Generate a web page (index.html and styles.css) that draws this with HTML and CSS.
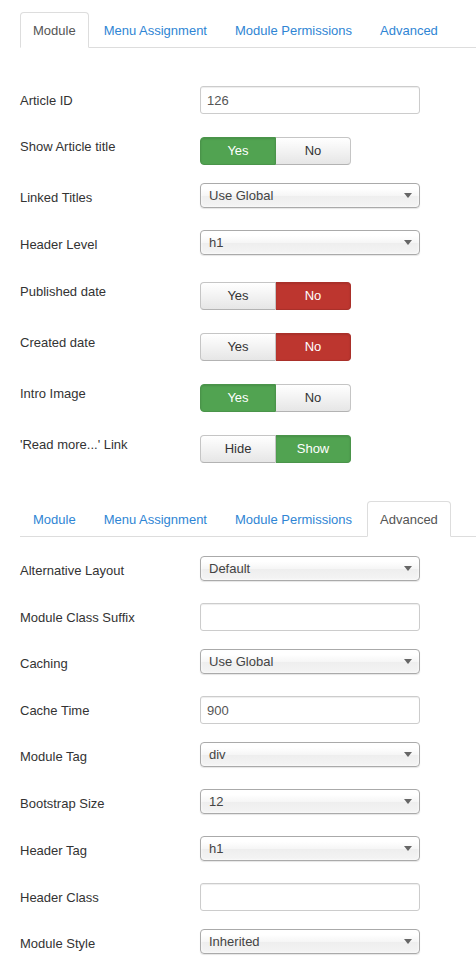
FILE: index.html
```html
<!DOCTYPE html>
<html>
<head>
<meta charset="utf-8">
<link rel="stylesheet" href="styles.css">
</head>
<body>
<div class="page">
  <ul class="tabs">
    <li><a class="tab active">Module</a></li>
    <li><a class="tab">Menu Assignment</a></li>
    <li><a class="tab">Module Permissions</a></li>
    <li><a class="tab">Advanced</a></li>
  </ul>
  <div class="form first">
    <div class="row">
      <label class="label">Article ID</label>
      <input class="text" type="text" value="126">
    </div>
    <div class="row">
      <label class="label">Show Article title</label>
      <div class="toggle"><span class="btn green">Yes</span><span class="btn">No</span></div>
    </div>
    <div class="row">
      <label class="label">Linked Titles</label>
      <div class="select"><span>Use Global</span><i class="arrow"></i></div>
    </div>
    <div class="row">
      <label class="label">Header Level</label>
      <div class="select"><span>h1</span><i class="arrow"></i></div>
    </div>
    <div class="row">
      <label class="label">Published date</label>
      <div class="toggle"><span class="btn">Yes</span><span class="btn red">No</span></div>
    </div>
    <div class="row">
      <label class="label">Created date</label>
      <div class="toggle"><span class="btn">Yes</span><span class="btn red">No</span></div>
    </div>
    <div class="row">
      <label class="label">Intro Image</label>
      <div class="toggle"><span class="btn green">Yes</span><span class="btn">No</span></div>
    </div>
    <div class="row">
      <label class="label">'Read more...' Link</label>
      <div class="toggle"><span class="btn">Hide</span><span class="btn green">Show</span></div>
    </div>
  </div>

  <ul class="tabs second">
    <li><a class="tab">Module</a></li>
    <li><a class="tab">Menu Assignment</a></li>
    <li><a class="tab">Module Permissions</a></li>
    <li><a class="tab active">Advanced</a></li>
  </ul>
  <div class="form">
    <div class="row">
      <label class="label">Alternative Layout</label>
      <div class="select"><span>Default</span><i class="arrow"></i></div>
    </div>
    <div class="row">
      <label class="label">Module Class Suffix</label>
      <input class="text" type="text" value="">
    </div>
    <div class="row">
      <label class="label">Caching</label>
      <div class="select"><span>Use Global</span><i class="arrow"></i></div>
    </div>
    <div class="row">
      <label class="label">Cache Time</label>
      <input class="text" type="text" value="900">
    </div>
    <div class="row">
      <label class="label">Module Tag</label>
      <div class="select"><span>div</span><i class="arrow"></i></div>
    </div>
    <div class="row">
      <label class="label">Bootstrap Size</label>
      <div class="select"><span>12</span><i class="arrow"></i></div>
    </div>
    <div class="row">
      <label class="label">Header Tag</label>
      <div class="select"><span>h1</span><i class="arrow"></i></div>
    </div>
    <div class="row">
      <label class="label">Header Class</label>
      <input class="text" type="text" value="">
    </div>
    <div class="row">
      <label class="label">Module Style</label>
      <div class="select"><span>Inherited</span><i class="arrow"></i></div>
    </div>
  </div>
</div>
</body>
</html>
```
FILE: styles.css
```css
* { box-sizing: border-box; }
html, body { margin: 0; padding: 0; background: #fff; }
body {
  font-family: "Liberation Sans", Arial, sans-serif;
  font-size: 13px;
  line-height: 18px;
  color: #333;
}
.page { padding: 12px 0 0 20px; }

.tabs {
  display: flex;
  list-style: none;
  margin: 0;
  padding: 0;
  border-bottom: 1px solid #ddd;
}
.tabs.second { margin-top: 38px; }
.tabs li { margin-bottom: -1px; }
.tab {
  display: block;
  padding: 9px 12px 7px;
  line-height: 18px;
  margin-right: 2px;
  border: 1px solid transparent;
  border-radius: 4px 4px 0 0;
  color: #2f85d4;
  cursor: pointer;
}
.tab.active {
  color: #555;
  background: #fff;
  border-color: #ddd #ddd transparent #ddd;
}

.form { margin-top: 19px; }
.form.first { margin-top: 38px; }
.row {
  display: flex;
  align-items: flex-start;
  margin-bottom: 18px;
}
.label {
  width: 180px;
  flex: none;
  padding-top: 6px;
  line-height: 18px;
  color: #333;
}

.text {
  width: 220px;
  height: 28px;
  margin: 0;
  padding: 0 6px;
  border: 1px solid #ccc;
  border-radius: 3px;
  font-family: "Liberation Sans", Arial, sans-serif;
  font-size: 13px;
  color: #555;
  background: #fff;
  box-shadow: inset 0 1px 1px rgba(0,0,0,0.075);
  outline: none;
}

.select {
  width: 220px;
  height: 25px;
  margin-bottom: 4px;
  display: flex;
  align-items: center;
  justify-content: space-between;
  padding: 0 7px 0 8px;
  border: 1px solid #aaa;
  border-radius: 4px;
  background: linear-gradient(#ffffff 20%, #f6f6f6 50%, #eeeeee 52%, #f4f4f4 100%);
  box-shadow: inset 0 0 3px #fff, 0 1px 1px rgba(0,0,0,0.1);
  color: #444;
  line-height: 23px;
}
.arrow {
  width: 0;
  height: 0;
  border-left: 4px solid transparent;
  border-right: 4px solid transparent;
  border-top: 5px solid #666;
}

.toggle {
  display: flex;
  margin-top: 5px;
}
.btn {
  width: 76px;
  height: 28px;
  display: flex;
  align-items: center;
  justify-content: center;
  border: 1px solid #c5c5c5;
  border-bottom-color: #b3b3b3;
  background: linear-gradient(#ffffff, #e6e6e6);
  color: #333;
  font-size: 13px;
}
.btn:first-child {
  border-radius: 4px 0 0 4px;
}
.btn:last-child {
  border-radius: 0 4px 4px 0;
  border-left: none;
  width: 75px;
}
.btn.green {
  background: #51a351;
  border-color: #4a944a;
  color: #fff;
  box-shadow: inset 0 1px 2px rgba(0,0,0,0.12);
}
.btn.red {
  background: #bd362f;
  border-color: #a9302a;
  color: #fff;
  box-shadow: inset 0 1px 2px rgba(0,0,0,0.12);
}
```
